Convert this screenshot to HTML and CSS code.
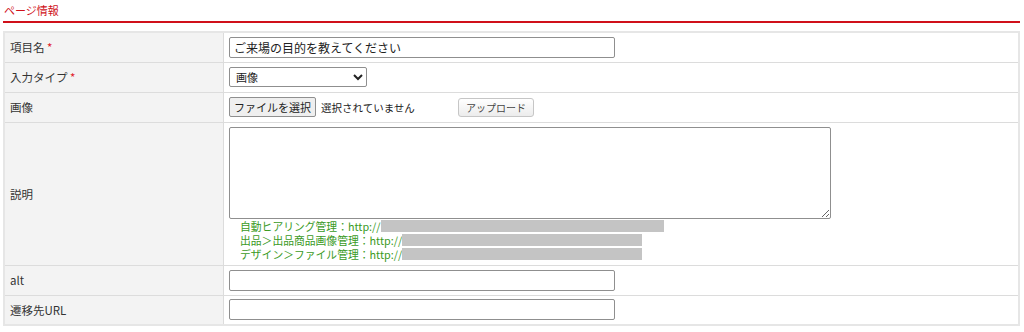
FILE: index.html
```html
<!DOCTYPE html>
<html lang="ja">
<head>
  <meta charset="UTF-8">
  <meta name="viewport" content="width=device-width, initial-scale=1">
  <title>ページ情報</title>
  <link rel="stylesheet" href="styles.css">
</head>
<body>
  <h2 class="section-title">ページ情報</h2>
  <table class="form-table">
    <tbody>
      <tr class="row-s">
        <th>項目名 <span class="req">*</span></th>
        <td><input type="text" class="txt" value="ご来場の目的を教えてください"></td>
      </tr>
      <tr class="row-s">
        <th>入力タイプ <span class="req">*</span></th>
        <td>
          <select class="sel">
            <option>画像</option>
          </select>
        </td>
      </tr>
      <tr class="row-s">
        <th>画像</th>
        <td>
          <div class="file-row">
            <span class="file-btn">ファイルを選択</span>
            <span class="file-none">選択されていません</span>
            <button class="upload-btn">アップロード</button>
          </div>
        </td>
      </tr>
      <tr>
        <th>説明</th>
        <td class="desc-cell">
          <textarea class="area"></textarea>
          <div class="notes">
            <p>自動ヒアリング管理：http://<span class="mask mask-long"></span></p>
            <p>出品＞出品商品画像管理：http://<span class="mask"></span></p>
            <p>デザイン＞ファイル管理：http://<span class="mask"></span></p>
          </div>
        </td>
      </tr>
      <tr class="row-s">
        <th>alt</th>
        <td><input type="text" class="txt"></td>
      </tr>
      <tr class="row-s">
        <th>遷移先URL</th>
        <td><input type="text" class="txt"></td>
      </tr>
    </tbody>
  </table>
</body>
</html>
```

FILE: styles.css
```css
body { margin: 0; padding: 0 4px 0 3px; background: #fff; color: #333; font-family: "Noto Sans CJK JP", "Noto Sans", sans-serif; font-size: 11px; }
.section-title { margin: 0; padding: 2px 0 0 1px; height: 19px; font-size: 11px; font-weight: normal; color: #d0101a; border-bottom: 2px solid #d0101a; }
.form-table { width: 100%; margin-top: 8px; border-collapse: collapse; border: 2px solid #e6e6e6; }
.form-table th, .form-table td { border: 1px solid #dcdcdc; text-align: left; font-weight: normal; padding: 0 5px; }
.form-table th { width: 208px; background: #f3f3f3; font-size: 11.5px; }
.form-table .desc-cell { padding-top: 4px; padding-bottom: 4px; }
.row-s { height: 30px; }
.req { color: #e0202a; }
.txt { box-sizing: border-box; width: 386px; height: 21px; margin: 0; padding: 1px 4px; border: 1px solid #8f8f8f; border-radius: 2px; font: inherit; font-size: 12px; color: #222; }
.sel { box-sizing: border-box; width: 138px; height: 20px; margin: 0; padding: 0 2px; border: 1px solid #8f8f8f; border-radius: 2px; background: #fff; font: inherit; font-size: 11px; color: #222; }
.file-row { display: flex; align-items: center; }
.file-btn { box-sizing: border-box; height: 20px; line-height: 18px; padding: 0 4px; border: 1px solid #8f8f8f; border-radius: 2px; background: #efefef; font-size: 11px; color: #222; }
.file-none { width: 137px; margin-left: 5px; font-size: 10.5px; color: #222; }
.upload-btn { height: 19px; padding: 0 7px; border: 1px solid #c6c6c6; border-radius: 3px; background: linear-gradient(#fff, #ececec); font: inherit; font-size: 10px; color: #444; }
.area { box-sizing: border-box; display: block; width: 602px; height: 92px; margin: 0; border: 1px solid #8f8f8f; border-radius: 2px; }
.notes { margin: 0 0 0 11px; color: #3a9a1e; font-size: 10.8px; line-height: 14px; }
.notes p { margin: 0; display: flex; align-items: center; }
.mask { display: inline-block; width: 240px; height: 12px; background: #c4c4c4; }
.mask-long { width: 283px; }
```
